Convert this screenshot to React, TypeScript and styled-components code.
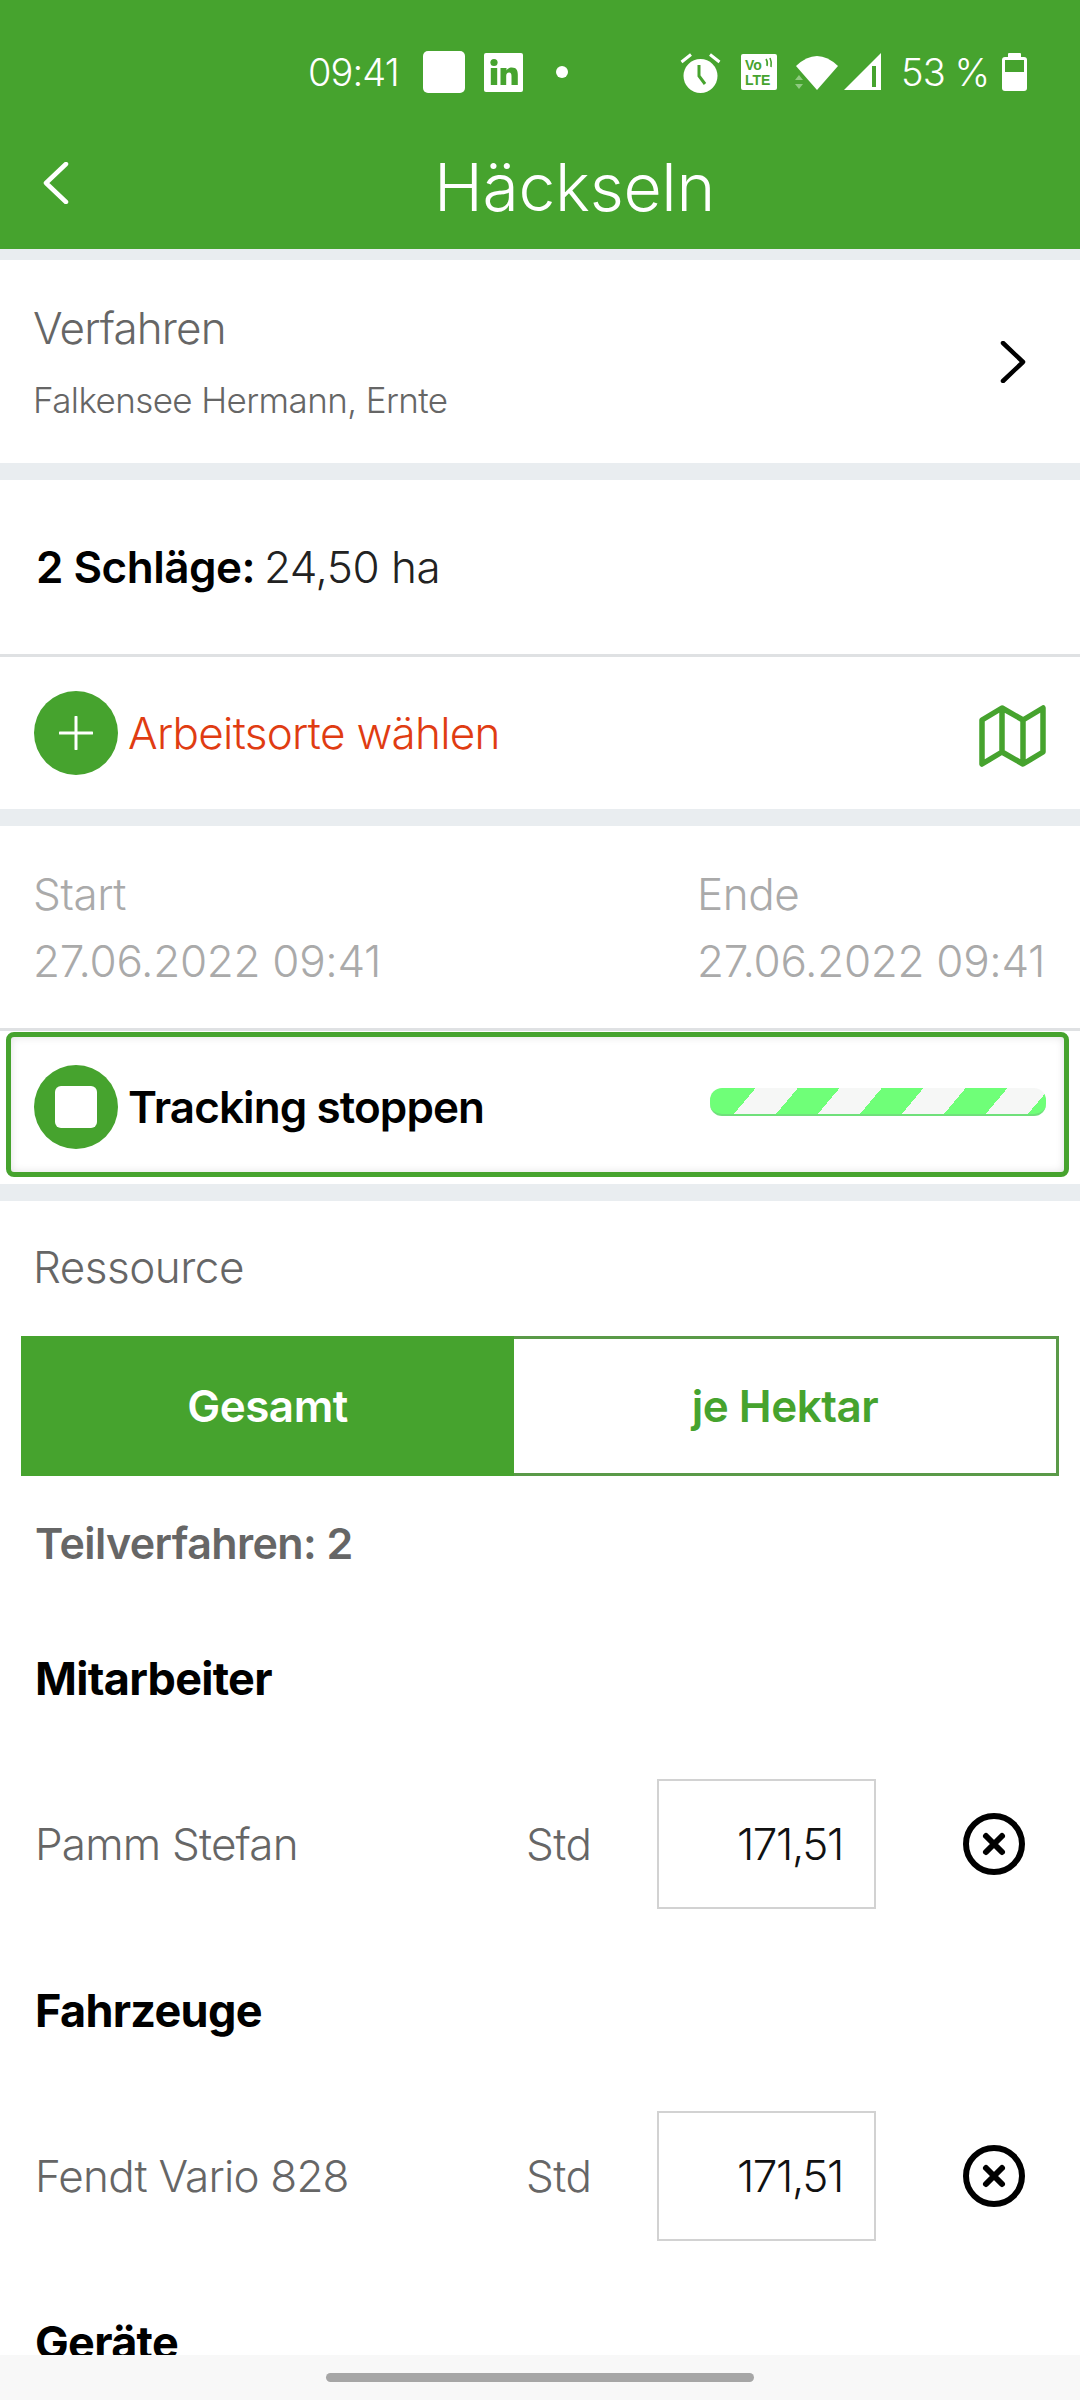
import React from "react";
import styled, { createGlobalStyle } from "styled-components";

const GREEN = "#46a32e";
const BAND = "#e9edf0";

const GlobalStyle = createGlobalStyle`
  html, body {
    margin: 0;
    padding: 0;
    background: #fff;
  }
  body {
    font-family: "Inter", "Liberation Sans", sans-serif;
    font-weight: 300;
  }
`;

const Screen = styled.div`
  position: relative;
  width: 1080px;
  height: 2400px;
  overflow: hidden;
  background: #fff;
`;

const Header = styled.header`
  height: 249px;
  background: ${GREEN};
  color: #fff;
`;

const StatusBar = styled.div`
  display: flex;
  align-items: center;
  height: 141px;
  box-sizing: border-box;
  padding: 3px 0 0 308px;
  font-size: 38px;
  letter-spacing: -0.9px;
`;

const StatusLeft = styled.div`
  display: flex;
  align-items: center;
  width: 372px;
  svg {
    display: block;
    flex: none;
  }
`;

const Time = styled.span`
  width: 115px;
`;

const StatusRight = styled.div`
  display: flex;
  align-items: center;
  svg {
    display: block;
    flex: none;
  }
`;

const Percent = styled.span`
  width: 101px;
  margin-left: 19px;
  white-space: nowrap;
`;

const TitleRow = styled.div`
  display: flex;
  align-items: center;
  height: 84px;
  padding-left: 43px;
`;

const Title = styled.h1`
  flex: 1;
  margin: 0;
  padding-top: 8px;
  text-align: center;
  font-size: 66px;
  font-weight: 300;
  letter-spacing: -0.3px;
`;

const Band = styled.div<{ $h: number }>`
  height: ${({ $h }) => $h}px;
  background: ${BAND};
`;

const Rule = styled.div`
  height: 3px;
  background: #dfe1e3;
`;

const VerfahrenRow = styled.section`
  display: flex;
  align-items: center;
  justify-content: space-between;
  height: 203px;
  padding: 0 54px 0 33px;
  color: #666;
`;

const VerfahrenText = styled.div`
  display: flex;
  flex-direction: column;
  gap: 27px;
`;

const VerfahrenTitle = styled.div`
  font-size: 44px;
  line-height: 50px;
  letter-spacing: -0.85px;
`;

const VerfahrenSub = styled.div`
  font-size: 35px;
  line-height: 40px;
  letter-spacing: -0.6px;
`;

const SummaryRow = styled.section`
  display: flex;
  align-items: center;
  gap: 9px;
  height: 174px;
  padding-left: 36px;
  font-size: 44px;
  letter-spacing: -0.5px;
  color: #222;
`;

const Strong = styled.strong`
  font-weight: 600;
  color: #000;
`;

const AddRow = styled.section`
  display: flex;
  align-items: center;
  height: 152px;
  padding: 0 33px 0 34px;
`;

const RoundButton = styled.div`
  display: flex;
  align-items: center;
  justify-content: center;
  flex: none;
  width: 84px;
  height: 84px;
  border-radius: 50%;
  background: ${GREEN};
`;

const AddLabel = styled.span`
  flex: 1;
  margin-left: 10px;
  font-size: 44px;
  letter-spacing: -0.7px;
  color: #e03c12;
`;

const MapSlot = styled.div`
  display: flex;
  margin-top: 5px;
`;

const DatesRow = styled.section`
  display: flex;
  justify-content: space-between;
  height: 202px;
  padding: 42px 33px 0 33px;
  box-sizing: border-box;
  color: #aaa;
`;

const DateCol = styled.div`
  display: flex;
  flex-direction: column;
  gap: 15px;
  width: 350px;
`;

const DateLabel = styled.div`
  font-size: 44px;
  line-height: 52px;
  letter-spacing: -0.4px;
`;

const DateValue = styled.div`
  font-size: 44px;
  line-height: 52px;
  letter-spacing: -0.3px;
  white-space: nowrap;
`;

const TrackingWrap = styled.section`
  height: 153px;
  padding: 1px 11px 6px 6px;
  box-sizing: border-box;
`;

const TrackingCard = styled.div`
  display: flex;
  align-items: center;
  height: 145px;
  box-sizing: border-box;
  padding: 5px 18px 0 23px;
  border: 5px solid ${GREEN};
  border-radius: 8px;
  box-shadow: inset 0 0 9px rgba(0, 0, 0, 0.12);
`;

const StopSquare = styled.div`
  width: 42px;
  height: 42px;
  border-radius: 6px;
  background: #fff;
`;

const TrackingLabel = styled.span`
  flex: 1;
  margin-left: 10px;
  font-size: 44px;
  font-weight: 600;
  letter-spacing: -0.9px;
  color: #000;
`;

const ProgressBar = styled.div`
  width: 336px;
  height: 28px;
  margin-bottom: 10px;
  box-sizing: border-box;
  border-radius: 12px;
  border-bottom: 2px solid #6fe07a;
  background: repeating-linear-gradient(
    130deg,
    #f6f7f6 0 3px,
    #6fff78 3px 35px,
    #f6f7f6 35px 64.3px
  );
`;

const Resources = styled.section`
  display: flex;
  flex-direction: column;
`;

const ResourceLabel = styled.div`
  height: 135px;
  padding: 41px 0 0 33px;
  box-sizing: border-box;
  font-size: 44px;
  line-height: 50px;
  letter-spacing: -0.5px;
  color: #666;
`;

const Segments = styled.div`
  display: flex;
  height: 140px;
  margin: 0 21px;
`;

const Segment = styled.div<{ $active?: boolean }>`
  display: flex;
  align-items: center;
  justify-content: center;
  flex: ${({ $active }) => ($active ? "0 0 493px" : "1")};
  box-sizing: border-box;
  font-size: 44px;
  font-weight: 600;
  letter-spacing: -0.5px;
  background: ${({ $active }) => ($active ? GREEN : "#fff")};
  color: ${({ $active }) => ($active ? "#fff" : GREEN)};
  border: 3px solid ${({ $active }) => ($active ? GREEN : "#5a9a48")};
  border-left: ${({ $active }) => ($active ? undefined : "none")};
`;

const Teilverfahren = styled.div`
  height: 169px;
  padding: 43px 0 0 35px;
  box-sizing: border-box;
  font-size: 43px;
  line-height: 48px;
  font-weight: 600;
  letter-spacing: -0.6px;
  color: #666;
`;

const GroupTitle = styled.h2`
  margin: 0;
  height: 68px;
  padding-left: 35px;
  font-size: 45px;
  line-height: 68px;
  font-weight: 700;
  letter-spacing: -0.7px;
  color: #000;
`;

const ResourceRow = styled.div`
  display: flex;
  align-items: center;
  height: 130px;
  margin: 66px 0 68px;
  padding-left: 35px;
  color: #666;
  font-size: 44px;
  letter-spacing: -0.8px;
`;

const ResourceName = styled.span`
  width: 491px;
`;

const Unit = styled.span`
  width: 131px;
  letter-spacing: -0.5px;
`;

const ValueBox = styled.div`
  display: flex;
  align-items: center;
  justify-content: flex-end;
  width: 219px;
  height: 130px;
  box-sizing: border-box;
  padding-right: 31px;
  border: 2px solid #d2d2d2;
  color: #111;
  letter-spacing: -1.4px;
`;

const RemoveButton = styled.div`
  display: flex;
  margin-left: 87px;
`;

const NavBar = styled.div`
  position: absolute;
  left: 0;
  right: 0;
  bottom: 0;
  display: flex;
  justify-content: center;
  height: 45px;
  padding-top: 18px;
  box-sizing: border-box;
  background: #f8f8f8;
`;

const NavPill = styled.div`
  width: 428px;
  height: 9px;
  border-radius: 5px;
  background: #a6a6a6;
`;

const Chevron = ({ dir, color }: { dir: "left" | "right"; color: string }) => (
  <svg width="26" height="42" viewBox="0 0 26 42" fill="none">
    <path
      d={dir === "left" ? "M23 2 L3 21 L23 40" : "M3 2 L23 21 L3 40"}
      stroke={color}
      strokeWidth="4.5"
      strokeLinecap="round"
      strokeLinejoin="round"
    />
  </svg>
);

const LinkedIn = () => (
  <svg width="39" height="39" viewBox="0 0 39 39" style={{ marginLeft: 19 }}>
    <rect width="39" height="39" rx="2" fill="#fff" />
    <circle cx="10" cy="9.5" r="3.6" fill={GREEN} />
    <rect x="6.8" y="15" width="6.4" height="17" fill={GREEN} />
    <path
      d="M16.5 15h6v2.6c1-1.8 3-3 5.3-3 4.6 0 6 2.8 6 7.2V32h-6.3v-9c0-2-.6-3.4-2.4-3.4-2 0-2.9 1.5-2.9 3.5V32h-5.7z"
      fill={GREEN}
    />
  </svg>
);

const Alarm = () => (
  <svg width="41" height="41" viewBox="0 0 41 41">
    <circle cx="20.5" cy="24" r="17" fill="#fff" />
    <path d="M1.5 10 L11 2.5 M39.5 10 L30 2.5" stroke="#fff" strokeWidth="3" />
    <path d="M19 13 L19 24 L25 32" stroke={GREEN} strokeWidth="3" fill="none" />
  </svg>
);

const VoLte = () => (
  <svg width="36" height="36" viewBox="0 0 36 36" style={{ marginLeft: 20 }}>
    <rect width="36" height="36" rx="2" fill="#fff" />
    <text x="4" y="16" fontFamily="Liberation Sans" fontWeight="700" fontSize="14" letterSpacing="0" fill={GREEN}>
      Vo
    </text>
    <text x="4" y="31" fontFamily="Liberation Sans" fontWeight="700" fontSize="14" letterSpacing="0" fill={GREEN}>
      LTE
    </text>
    <path d="M25 5 Q27 8 26 12 M29 4 Q31 8 30 13" stroke={GREEN} strokeWidth="1.6" fill="none" />
  </svg>
);

const Wifi = () => (
  <svg width="44" height="36" viewBox="0 0 44 36" style={{ marginLeft: 18 }}>
    <path d="M1 12 Q22 -8 43 12 L22 36 Z" fill="#fff" />
    <path d="M0 26 L4 21 L8 26 Z M0 30 L8 30 L4 35 Z" fill="#8fca80" />
  </svg>
);

const Signal = () => (
  <svg width="38" height="38" viewBox="0 0 38 38" style={{ marginLeft: 5 }}>
    <path d="M0 37 L37 0 L37 37 Z" fill="#fff" />
    <rect x="28" y="13" width="4" height="21" fill={GREEN} />
  </svg>
);

const Battery = () => (
  <svg width="25" height="38" viewBox="0 0 25 38">
    <rect x="6" y="0" width="13" height="5" rx="1" fill="#fff" />
    <rect x="0" y="4" width="25" height="34" rx="3" fill="#fff" />
    <rect x="3" y="7" width="19" height="12" fill={GREEN} />
  </svg>
);

const MapIcon = () => (
  <svg width="68" height="62" viewBox="0 0 68 62" fill="none">
    <path
      d="M3 15 L23 3 L44 15 L64 3 L64 47 L44 59 L23 47 L3 59 Z M23 3 L23 47 M44 15 L44 59"
      stroke={GREEN}
      strokeWidth="5.5"
      strokeLinejoin="round"
    />
  </svg>
);

const Plus = () => (
  <svg width="34" height="34" viewBox="0 0 34 34">
    <path d="M17 1 V33 M1 17 H33" stroke="#fff" strokeWidth="3" strokeLinecap="round" />
  </svg>
);

const RemoveIcon = () => (
  <svg width="62" height="62" viewBox="0 0 62 62" fill="none">
    <circle cx="31" cy="31" r="28" stroke="#000" strokeWidth="6" />
    <path d="M23 23 L39 39 M39 23 L23 39" stroke="#000" strokeWidth="6" strokeLinecap="round" />
  </svg>
);

const App: React.FC = () => {
  return (
    <Screen>
      <GlobalStyle />
      <Header>
        <StatusBar>
          <StatusLeft>
            <Time>09:41</Time>
            <svg width="42" height="42" viewBox="0 0 42 42">
              <rect width="42" height="42" rx="5" fill="#fff" />
            </svg>
            <LinkedIn />
            <svg width="12" height="12" viewBox="0 0 12 12" style={{ marginLeft: 33 }}>
              <circle cx="6" cy="6" r="6" fill="#fff" />
            </svg>
          </StatusLeft>
          <StatusRight>
            <Alarm />
            <VoLte />
            <Wifi />
            <Signal />
            <Percent>53 %</Percent>
            <Battery />
          </StatusRight>
        </StatusBar>
        <TitleRow>
          <Chevron dir="left" color="#fff" />
          <Title>Häckseln</Title>
        </TitleRow>
      </Header>
      <Band $h={11} />
      <VerfahrenRow>
        <VerfahrenText>
          <VerfahrenTitle>Verfahren</VerfahrenTitle>
          <VerfahrenSub>Falkensee Hermann, Ernte</VerfahrenSub>
        </VerfahrenText>
        <Chevron dir="right" color="#000" />
      </VerfahrenRow>
      <Band $h={17} />
      <SummaryRow>
        <Strong>2 Schläge:</Strong>
        <span>24,50 ha</span>
      </SummaryRow>
      <Rule />
      <AddRow>
        <RoundButton>
          <Plus />
        </RoundButton>
        <AddLabel>Arbeitsorte wählen</AddLabel>
        <MapSlot>
          <MapIcon />
        </MapSlot>
      </AddRow>
      <Band $h={17} />
      <DatesRow>
        <DateCol>
          <DateLabel>Start</DateLabel>
          <DateValue>27.06.2022 09:41</DateValue>
        </DateCol>
        <DateCol>
          <DateLabel>Ende</DateLabel>
          <DateValue>27.06.2022 09:41</DateValue>
        </DateCol>
      </DatesRow>
      <Rule />
      <TrackingWrap>
        <TrackingCard>
          <RoundButton>
            <StopSquare />
          </RoundButton>
          <TrackingLabel>Tracking stoppen</TrackingLabel>
          <ProgressBar />
        </TrackingCard>
      </TrackingWrap>
      <Band $h={17} />
      <Resources>
        <ResourceLabel>Ressource</ResourceLabel>
        <Segments>
          <Segment $active>Gesamt</Segment>
          <Segment>je Hektar</Segment>
        </Segments>
        <Teilverfahren>Teilverfahren: 2</Teilverfahren>
        <GroupTitle>Mitarbeiter</GroupTitle>
        <ResourceRow>
          <ResourceName>Pamm Stefan</ResourceName>
          <Unit>Std</Unit>
          <ValueBox>171,51</ValueBox>
          <RemoveButton>
            <RemoveIcon />
          </RemoveButton>
        </ResourceRow>
        <GroupTitle>Fahrzeuge</GroupTitle>
        <ResourceRow>
          <ResourceName>Fendt Vario 828</ResourceName>
          <Unit>Std</Unit>
          <ValueBox>171,51</ValueBox>
          <RemoveButton>
            <RemoveIcon />
          </RemoveButton>
        </ResourceRow>
        <GroupTitle>Geräte</GroupTitle>
      </Resources>
      <NavBar>
        <NavPill />
      </NavBar>
    </Screen>
  );
};

export default App;
